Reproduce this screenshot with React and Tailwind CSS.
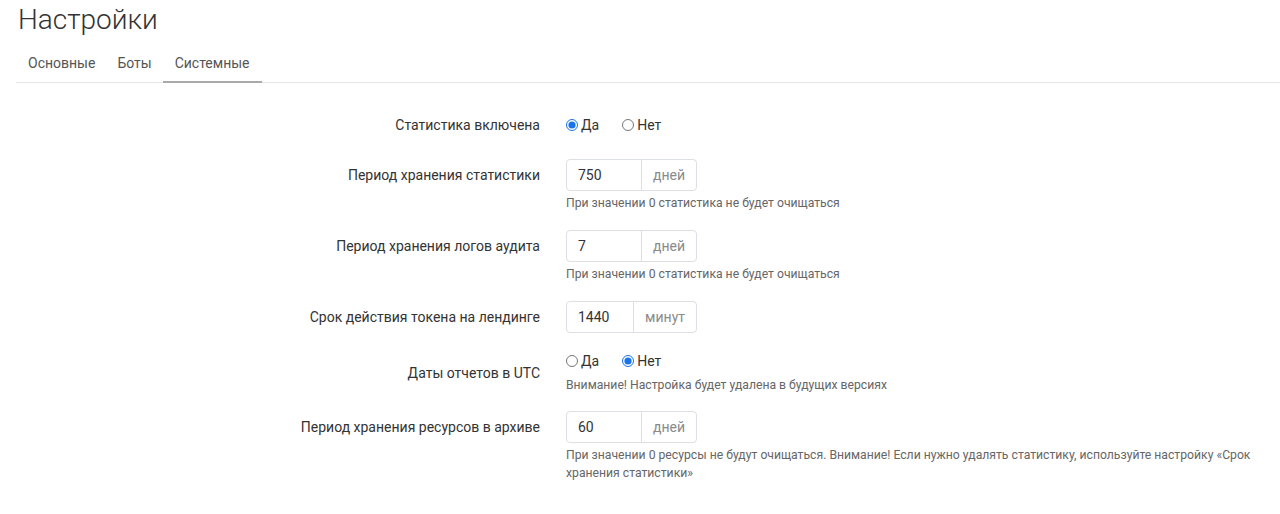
import React, { useState } from 'react';

const rows = [
  { label: 'Период хранения статистики', value: '750', unit: 'дней', help: 'При значении 0 статистика не будет очищаться', mb: 'mb-[18px]' },
  { label: 'Период хранения логов аудита', value: '7', unit: 'дней', help: 'При значении 0 статистика не будет очищаться', mb: 'mb-[18px]' },
  { label: 'Срок действия токена на лендинге', value: '1440', unit: 'минут', mb: 'mb-[18px]' },
];

const Radio = ({ name, checked, onChange, children }) => (
  <label className="flex items-center mr-[23px] cursor-pointer">
    <input
      type="radio"
      name={name}
      checked={checked}
      onChange={onChange}
      className="m-0 w-[12px] h-[12px] accent-[#1a73e8]"
    />
    <span className="ml-[3px]">{children}</span>
  </label>
);

const InputGroup = ({ value, unit }) => (
  <div className="flex w-[131px] h-[32px] border border-[#dcdfe3] rounded-[4px] text-[14px]">
    <input
      defaultValue={value}
      className="flex-1 min-w-0 px-[11px] text-[#333] outline-none bg-transparent"
    />
    <span className="flex items-center px-[11px] border-l border-[#dcdfe3] text-[#8a8a8a]">{unit}</span>
  </div>
);

const Help = ({ children, className = '' }) => (
  <p className={`text-[12.2px] leading-[18px] text-[#666] ${className}`}>{children}</p>
);

const App = () => {
  const [stats, setStats] = useState(true);
  const [utc, setUtc] = useState(false);

  return (
    <div className="min-h-screen bg-white text-[#333]" style={{ fontFamily: 'Roboto, "Noto Sans", sans-serif' }}>
      <div className="pl-4">
        <h1 className="h-[45px] pt-[3px] pl-[2px] text-[28px] leading-[34px] font-light text-[#333]">Настройки</h1>

        <div className="flex border-b border-[#e5e5e5] text-[14px]">
          <button className="pl-3 pr-[11px] py-2 leading-5 text-[#555] border-b-2 border-transparent -mb-px">Основные</button>
          <button className="pl-[11px] pr-[11px] py-2 leading-5 text-[#555] border-b-2 border-transparent -mb-px">Боты</button>
          <button className="px-3 py-2 leading-5 text-[#555] border-b-2 border-[#aaa] -mb-px">Системные</button>
        </div>

        <div className="pt-[26px] text-[14px]">
          {/* статистика */}
          <div className="grid grid-cols-[524px_1fr] gap-x-[26px] h-[32px] mb-[18px]">
            <div className="text-right leading-[32px]">Статистика включена</div>
            <div className="flex items-center">
              <Radio name="stats" checked={stats} onChange={() => setStats(true)}>Да</Radio>
              <Radio name="stats" checked={!stats} onChange={() => setStats(false)}>Нет</Radio>
            </div>
          </div>

          {rows.map((r, i) => (
            <div key={i} className={`grid grid-cols-[524px_1fr] gap-x-[26px] ${r.mb}`}>
              <div className="text-right leading-[32px]">{r.label}</div>
              <div>
                <InputGroup value={r.value} unit={r.unit} />
                {r.help && <Help className="mt-[3px]">{r.help}</Help>}
              </div>
            </div>
          ))}

          {/* utc */}
          <div className="grid grid-cols-[524px_1fr] gap-x-[26px] mb-[17px]">
            <div className="text-right leading-5 pt-[12px]">Даты отчетов в UTC</div>
            <div>
              <div className="flex items-center h-5">
                <Radio name="utc" checked={utc} onChange={() => setUtc(true)}>Да</Radio>
                <Radio name="utc" checked={!utc} onChange={() => setUtc(false)}>Нет</Radio>
              </div>
              <Help className="mt-[5px]">Внимание! Настройка будет удалена в будущих версиях</Help>
            </div>
          </div>

          <div className="grid grid-cols-[524px_1fr] gap-x-[26px]">
            <div className="text-right leading-[32px]">Период хранения ресурсов в архиве</div>
            <div className="pr-[8px]">
              <InputGroup value="60" unit="дней" />
              <Help className="mt-[3px]">
                При значении 0 ресурсы не будут очищаться. Внимание! Если нужно удалять статистику, используйте настройку «Срок хранения статистики»
              </Help>
            </div>
          </div>
        </div>
      </div>
    </div>
  );
};

export default App;
